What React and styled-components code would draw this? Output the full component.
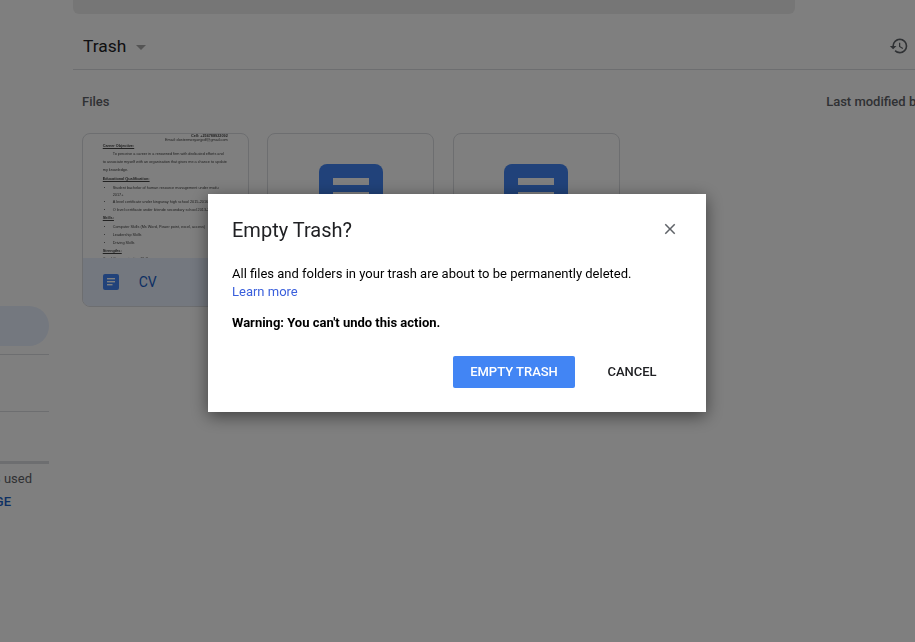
import React from "react";
import styled, { createGlobalStyle } from "styled-components";
import { MdHistory, MdClose } from "react-icons/md";

const GlobalStyle = createGlobalStyle`
  html, body {
    margin: 0;
    height: 100%;
    overflow: hidden;
    background: #fff;
    font-family: Roboto, "Liberation Sans", sans-serif;
  }
`;

const Page = styled.div`
  display: flex;
  width: 915px;
  height: 642px;
  overflow: hidden;
`;

const Sidebar = styled.aside`
  flex: 0 0 49px;
  display: flex;
  flex-direction: column;
  padding-top: 306px;
  margin-right: 24px;
  overflow: hidden;
`;

const ActiveItem = styled.div`
  height: 40px;
  background: #e8f0fe;
  border-radius: 0 20px 20px 0;
`;

const Divider = styled.div`
  height: 1px;
  background: #dadce0;
  margin-top: ${(p) => p.$top}px;
`;

const StorageBar = styled.div`
  height: 3px;
  background: #dadce0;
  margin-top: 49px;
`;

const SideText = styled.div`
  display: flex;
  justify-content: flex-end;
  white-space: nowrap;
  font-size: 13px;
  line-height: 20px;
  color: #5f6368;
  margin-top: 5px;
  padding-right: 17px;
`;

const UpgradeLink = styled.div`
  display: flex;
  justify-content: flex-end;
  white-space: nowrap;
  font-size: 13px;
  font-weight: 500;
  line-height: 18px;
  color: #1a5fc8;
  margin-top: 4px;
  padding-right: 38px;
`;

const Main = styled.main`
  flex: 1;
  min-width: 0;
  display: flex;
  flex-direction: column;
`;

const SearchBar = styled.div`
  width: 722px;
  height: 14px;
  background: #ededed;
  border-radius: 0 0 6px 6px;
`;

const Header = styled.header`
  box-sizing: border-box;
  height: 56px;
  display: flex;
  align-items: center;
  padding: 9px 6px 0 10px;
  border-bottom: 1px solid #dadce0;
  color: #202124;
`;

const Title = styled.h1`
  margin: 0;
  font-size: 17.4px;
  font-weight: 400;
  line-height: 24px;
`;

const Caret = styled.span`
  width: 0;
  height: 0;
  margin: 2px 0 0 10px;
  border-left: 5px solid transparent;
  border-right: 5px solid transparent;
  border-top: 5px solid #a8a8a8;
`;

const HeaderActions = styled.div`
  margin-left: auto;
  display: flex;
  color: #5f6368;
  font-size: 20px;
`;

const SectionRow = styled.div`
  display: flex;
  justify-content: space-between;
  padding: 23px 0 0 9px;
  height: 18px;
  white-space: nowrap;
  font-size: 13px;
  line-height: 18px;
  font-weight: 500;
  color: #5f6368;
`;

const SortLabel = styled.span`
  margin-right: -29px;
`;

const FileGrid = styled.div`
  display: flex;
  gap: 18.5px;
  margin: 22px 0 0 8.75px;
`;

const Card = styled.div`
  box-sizing: border-box;
  flex: 0 0 167px;
  height: 174px;
  border: 1px solid #dadce0;
  border-radius: 8px;
  overflow: hidden;
  background: #fff;
  display: flex;
  flex-direction: column;
`;

const Thumb = styled.div`
  flex: 1;
  min-height: 0;
  overflow: hidden;
  padding: 0 20px;
  font-family: "Liberation Sans", sans-serif;
  font-size: 3.8px;
  line-height: 8px;
  color: #444;
  filter: blur(0.3px);
`;

const DocRight = styled.div`
  text-align: right;
  line-height: 4px;
  font-weight: ${(p) => (p.$bold ? 700 : 400)};
  white-space: nowrap;
`;

const DocHead = styled.div`
  font-weight: 700;
  text-decoration: underline;
  margin-top: ${(p) => p.$top || 0}px;
`;

const DocLine = styled.div`
  white-space: nowrap;
  line-height: ${(p) => (p.$tight ? 6 : 8)}px;
  padding-left: ${(p) => (p.$indent ? 10 : 0)}px;
`;

const DocList = styled.ul`
  margin: 1px 0 0;
  padding: 0 0 0 10px;
  list-style: disc;
  white-space: nowrap;
`;

const CardFooter = styled.div`
  flex: 0 0 48px;
  display: flex;
  align-items: center;
  gap: 20px;
  padding-left: 20px;
  background: #e8f0fe;
  color: #1a5fc8;
  font-size: 14px;
  font-weight: 400;
`;

const BlankThumb = styled.div`
  flex: 1;
  display: flex;
  justify-content: center;
  padding-top: 30px;
`;

const Overlay = styled.div`
  position: fixed;
  inset: 0;
  background: rgba(0, 0, 0, 0.5);
`;

const Dialog = styled.div`
  position: fixed;
  left: 208px;
  top: 194px;
  box-sizing: border-box;
  width: 498px;
  height: 218px;
  padding: 24px 24px 0;
  background: #fff;
  box-shadow: 0 4px 16px rgba(0, 0, 0, 0.5);
  color: #000;
`;

const DialogHead = styled.div`
  display: flex;
  align-items: center;
  justify-content: space-between;
  height: 24px;
`;

const DialogTitle = styled.h2`
  margin: 0;
  font-size: 20px;
  font-weight: 400;
  line-height: 24px;
  color: #202124;
`;

const CloseButton = styled.button`
  display: flex;
  border: 0;
  padding: 0;
  margin: -2px 3px 0 0;
  background: none;
  color: #5f6368;
  font-size: 18px;
`;

const DialogText = styled.p`
  margin: 23px 0 0;
  font-size: 13px;
  line-height: 18px;
`;

const LearnMore = styled.a`
  color: #3a5fdc;
  text-decoration: none;
`;

const Warning = styled.p`
  margin: 13px 0 0;
  font-size: 13px;
  line-height: 18px;
  font-weight: 700;
`;

const DialogActions = styled.div`
  display: flex;
  justify-content: flex-end;
  gap: 17px;
  margin: 24px 10px 0 0;
`;

const Button = styled.button`
  height: 32px;
  width: ${(p) => (p.$primary ? 122 : 80)}px;
  border: 0;
  border-radius: 2px;
  background: ${(p) => (p.$primary ? "#4285f4" : "transparent")};
  color: ${(p) => (p.$primary ? "#fff" : "#202124")};
  font-family: Roboto, sans-serif;
  font-size: 13px;
  font-weight: 500;
  padding: 0 0 2px;
`;

function DocIcon({ size }) {
  return (
    <svg width={size} height={size} viewBox="0 0 64 64">
      <rect width="64" height="64" rx="8" fill="#4285f4" />
      <rect x="14" y="14" width="36" height="7" fill="#fff" />
      <rect x="14" y="28" width="36" height="7" fill="#fff" />
      <rect x="14" y="42" width="36" height="7" fill="#fff" />
    </svg>
  );
}

function SmallDocIcon() {
  return (
    <svg width="16" height="16" viewBox="0 0 16 16">
      <rect width="16" height="16" rx="2" fill="#4285f4" />
      <rect x="4" y="4" width="8" height="1.4" fill="#fff" />
      <rect x="4" y="7" width="8" height="1.4" fill="#fff" />
      <rect x="4" y="10" width="5.5" height="1.4" fill="#fff" />
    </svg>
  );
}

export default function App() {
  return (
    <>
      <GlobalStyle />
      <Page>
        <Sidebar>
          <ActiveItem />
          <Divider $top={8} />
          <Divider $top={56} />
          <StorageBar />
          <SideText>1 GB of 15 GB used</SideText>
          <UpgradeLink>UPGRADE STORAGE</UpgradeLink>
        </Sidebar>
        <Main>
          <SearchBar />
          <Header>
            <Title>Trash</Title>
            <Caret />
            <HeaderActions>
              <MdHistory />
            </HeaderActions>
          </Header>
          <SectionRow>
            <span>Files</span>
            <SortLabel>Last modified by me</SortLabel>
          </SectionRow>
          <FileGrid>
            <Card>
              <Thumb>
                <DocRight $bold>Cell: +256788922092</DocRight>
                <DocRight>Email: dostermosyanjpdf@gmail.com</DocRight>
                <DocHead>Career Objective:</DocHead>
                <DocLine $indent>To perceive a career in a renowned firm with dedicated efforts and</DocLine>
                <DocLine>to associate myself with an organisation that gives me a chance to update</DocLine>
                <DocLine>my knowledge.</DocLine>
                <DocHead $top={1}>Educational Qualification:</DocHead>
                <DocList>
                  <li>Student bachelor of human resource management under msdu</li>
                  <DocLine as="div" $tight>2017+</DocLine>
                  <li>A level certificate under kingsway high school 2015-2016</li>
                  <li>O level certificate under kitende secondary school 2013-2014</li>
                </DocList>
                <DocHead>Skills:</DocHead>
                <DocList>
                  <li>Computer Skills (Ms Word, Power point, excel, access)</li>
                  <li>Leadership Skills</li>
                  <li>Driving Skills</li>
                </DocList>
                <DocHead>Strengths:</DocHead>
                <DocLine>Good Communication Skills</DocLine>
              </Thumb>
              <CardFooter>
                <SmallDocIcon />
                CV
              </CardFooter>
            </Card>
            <Card>
              <BlankThumb>
                <DocIcon size={64} />
              </BlankThumb>
            </Card>
            <Card>
              <BlankThumb>
                <DocIcon size={64} />
              </BlankThumb>
            </Card>
          </FileGrid>
        </Main>
      </Page>
      <Overlay />
      <Dialog>
        <DialogHead>
          <DialogTitle>Empty Trash?</DialogTitle>
          <CloseButton>
            <MdClose />
          </CloseButton>
        </DialogHead>
        <DialogText>
          All files and folders in your trash are about to be permanently deleted.
          <br />
          <LearnMore>Learn more</LearnMore>
        </DialogText>
        <Warning>Warning: You can't undo this action.</Warning>
        <DialogActions>
          <Button $primary>EMPTY TRASH</Button>
          <Button>CANCEL</Button>
        </DialogActions>
      </Dialog>
    </>
  );
}
